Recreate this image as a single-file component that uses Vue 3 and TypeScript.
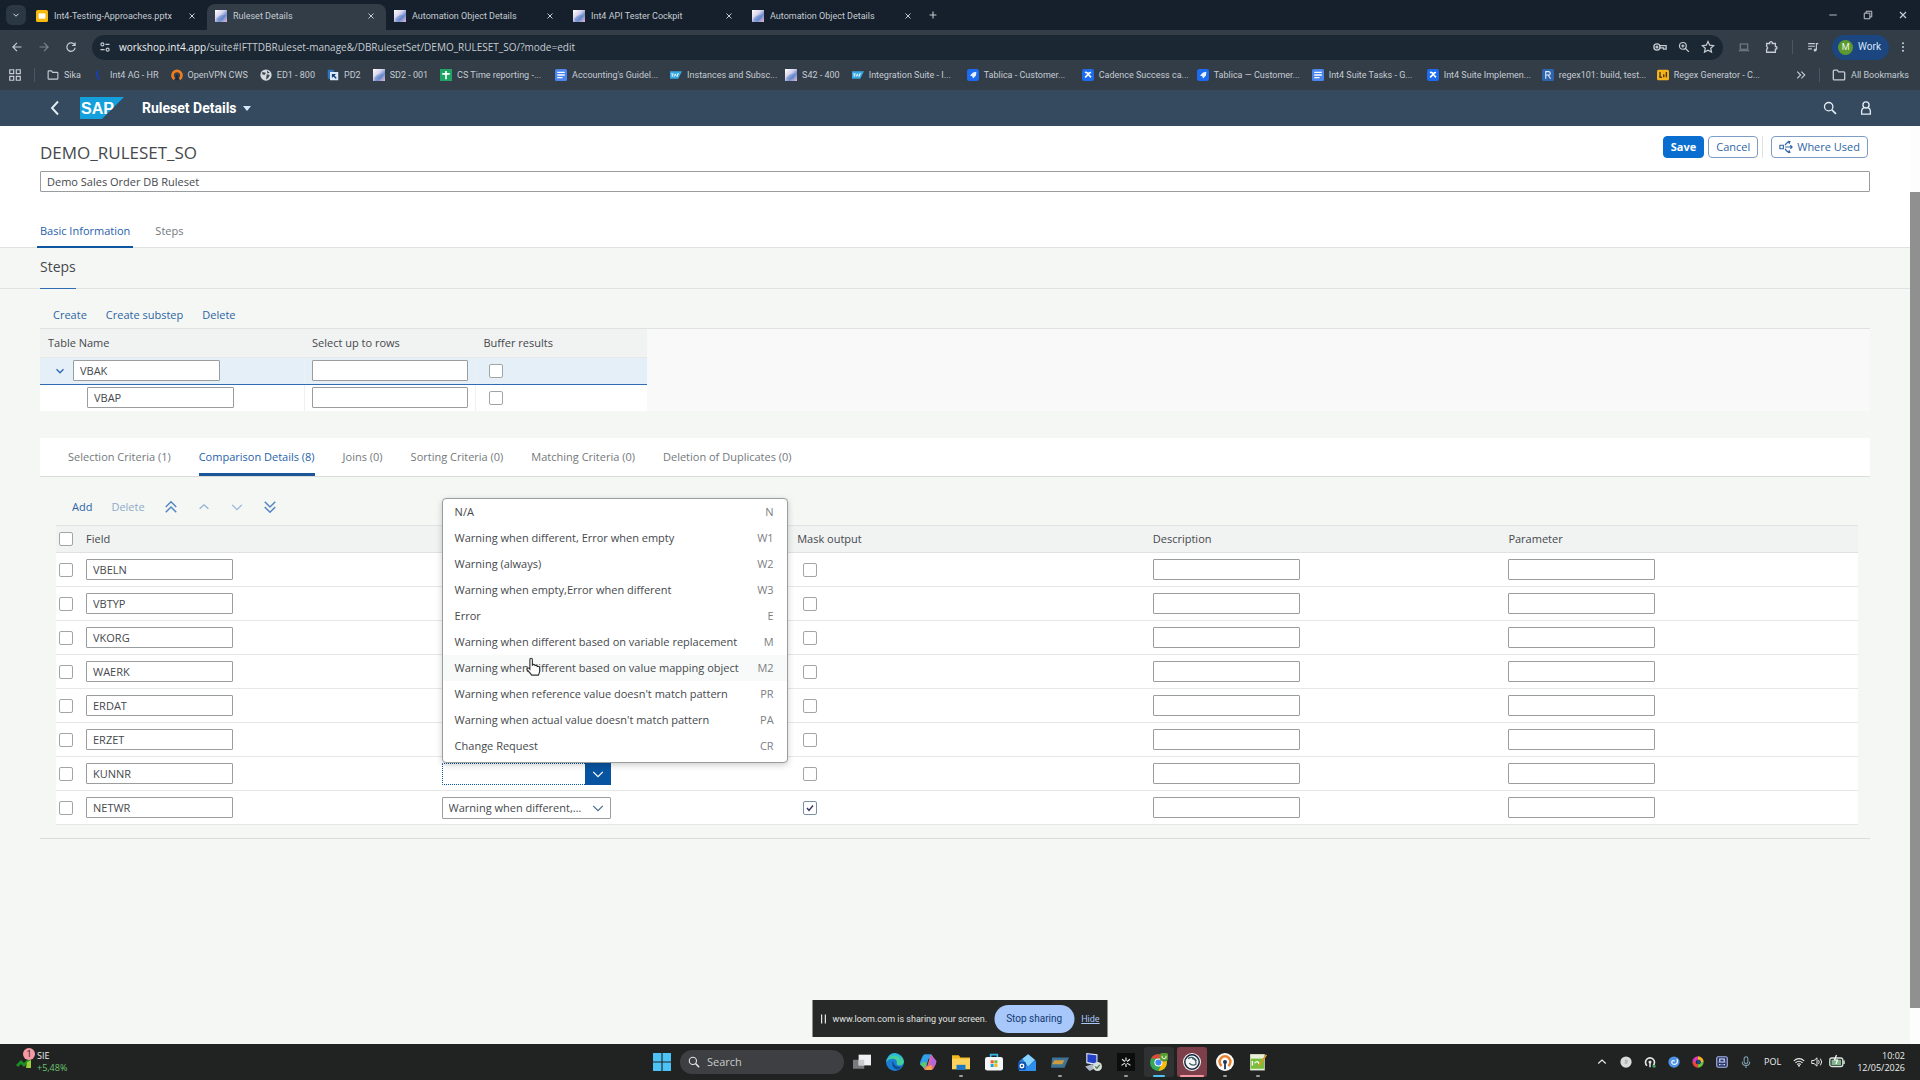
<script setup lang="ts">
import { ref } from 'vue'

const icons: Record<string, string> = {
  down: '<path d="M4 6l4 4 4-4" fill="none" stroke="currentColor" stroke-width="1.6"/>',
  up: '<path d="M3 10l5-4.500 5 4.500" fill="none" stroke="currentColor" stroke-width="1.500"/>',
  thinDown: '<path d="M2.500 5.500L8 11l5.500-5.500" fill="none" stroke="currentColor" stroke-width="1.400"/>',
  top: '<path d="M2 8l6-6 6 6M2 14l6-6 6 6" fill="none" stroke="currentColor" stroke-width="1.700"/>',
  bottom: '<path d="M2 2l6 6 6-6M2 8l6 6 6-6" fill="none" stroke="currentColor" stroke-width="1.700"/>',
  close: '<path d="M4 4l8 8M12 4l-8 8" fill="none" stroke="currentColor" stroke-width="1.600"/>',
  plus: '<path d="M8 2.500v11M2.500 8h11" fill="none" stroke="currentColor" stroke-width="1.700"/>',
  minimise: '<path d="M3 8h10" stroke="currentColor" stroke-width="1.200"/>',
  restore: '<path d="M3 5.500h7.500V13H3zM5.500 5.500V3H13v7.500h-2.500" fill="none" stroke="currentColor" stroke-width="1.300"/>',
  back: '<path d="M14 8H3M8 2.500L2.500 8 8 13.500" fill="none" stroke="currentColor" stroke-width="1.600"/>',
  forward: '<path d="M2 8h11M8 2.500L13.500 8 8 13.500" fill="none" stroke="currentColor" stroke-width="1.600"/>',
  reload: '<path d="M13 5.500A5.600 5.600 0 1 0 13.600 9M13.500 2v4h-4" fill="none" stroke="currentColor" stroke-width="1.600"/>',
  tune: '<g fill="none" stroke="currentColor" stroke-width="1.500"><circle cx="4.500" cy="4.500" r="2"/><path d="M8.500 4.500H14M2 11.500h5.500"/><circle cx="11.500" cy="11.500" r="2"/></g>',
  apps: '<path d="M2 2h4.500v4.500H2zM9.500 2H14v4.500H9.500zM2 9.500h4.500V14H2zM9.500 9.500H14V14H9.500z" fill="none" stroke="currentColor" stroke-width="1.400"/>',
  folder: '<path d="M1.500 3.500q0-1 1-1h3.500l1.500 2h6q1 0 1 1v7q0 1-1 1h-11q-1 0-1-1z" fill="none" stroke="currentColor" stroke-width="1.500"/>',
  key: '<g fill="none" stroke="currentColor" stroke-width="1.500"><circle cx="4.500" cy="8" r="3.500"/><circle cx="4.500" cy="8" r="1"/><path d="M8 6.500h7v4h-3V9H8"/></g>',
  zoomIn: '<g fill="none" stroke="currentColor" stroke-width="1.600"><circle cx="6.500" cy="6.500" r="4.500"/><path d="M10 10l4.500 4.500M6.500 4.500v4M4.500 6.500h4"/></g>',
  star: '<path d="M8 1.800l1.900 4.100 4.500.5-3.300 3 .9 4.400L8 11.600l-4 2.200.9-4.400-3.300-3 4.500-.5z" fill="none" stroke="currentColor" stroke-width="1.400"/>',
  laptop: '<path d="M3 4h10v7H3zM1 13h14" fill="none" stroke="currentColor" stroke-width="1.400"/>',
  puzzle: '<path d="M3 4h3.500V2.800q1.500-1.800 3 0V4H13v3.500h1q1.600 1.500 0 3h-1V14H3v-3.500q2.400-1.500 0-3z" fill="none" stroke="currentColor" stroke-width="1.500"/>',
  queue: '<path d="M1.500 3.500h9M1.500 7h9M1.500 10.500h5M12.500 12V3.500H15" fill="none" stroke="currentColor" stroke-width="1.500"/><circle cx="10.800" cy="12" r="2" fill="currentColor"/>',
  kebab: '<g fill="currentColor"><circle cx="8" cy="3" r="1.400"/><circle cx="8" cy="8" r="1.400"/><circle cx="8" cy="13" r="1.400"/></g>',
  more: '<path d="M3 3.500L7.500 8 3 12.500M8.500 3.500L13 8l-4.500 4.500" fill="none" stroke="currentColor" stroke-width="1.500"/>',
  navBack: '<path d="M11 1.500L5 8l6 6.500" fill="none" stroke="currentColor" stroke-width="1.900"/>',
  search: '<circle cx="6.500" cy="6.500" r="4.800" fill="none" stroke="currentColor" stroke-width="1.500"/><path d="M10 10l4.800 4.800" stroke="currentColor" stroke-width="2"/>',
  person: '<circle cx="8" cy="4.500" r="3.500" fill="none" stroke="currentColor" stroke-width="1.500"/><path d="M5.500 7.500Q3 9 3 11.500V15h10v-3.500Q13 9 10.500 7.500" fill="none" stroke="currentColor" stroke-width="1.500"/>',
  usage: '<g fill="none" stroke="currentColor" stroke-width="1.300"><path d="M1 6h4v4H1zM7 8h8M13 6l2 2-2 2M7 6q1-3 5-4M10 1.500l2.500.5-1 2.300M7 10q1 3 5 4M10 14.500l2.500-.5-1-2.300"/></g>',
  tile: '<defs><linearGradient id="tileFill" x1="0" y1="0" x2="1" y2="1"><stop offset="0" stop-color="#fff"/><stop offset=".4" stop-color="#d9d4ee"/><stop offset=".65" stop-color="#6f8fd0"/><stop offset="1" stop-color="#e9b6d6"/></linearGradient></defs><path d="M0 0h16v16H0z" fill="url(#tileFill)"/><path d="M2 11q5-6 12-4l-3 6-9 1z" fill="#4c7dc4" opacity=".4"/>',
  slides: '<rect width="16" height="16" rx="2" fill="#f6b90c"/><path d="M3.500 4.500h9v7h-9z" fill="#fff"/>',
  sheets: '<path d="M0 0h16v16H0z" fill="#1fa463"/><path d="M8 2.500v11M3 6.500h10" stroke="#fff" stroke-width="2.200"/>',
  docs: '<rect width="16" height="16" rx="2" fill="#4a86ee"/><path d="M3 4.500h10M3 8h10M3 11.500h7" stroke="#fff" stroke-width="1.900"/>',
  arc: '<path d="M7 2q-4 6 1 12" fill="none" stroke="#1d3fae" stroke-width="2.600"/>',
  vpn: '<path d="M4.500 13.500A6 6 0 1 1 11.500 13.500" fill="none" stroke="#ee7d20" stroke-width="3.600"/><path d="M6.800 8h2.400l1 7H5.800z" fill="#1b2a44"/>',
  globe: '<circle cx="8" cy="8" r="7.500" fill="#d5d9dd"/><path d="M3 4l5 1-2 3-3-1zM9 7l4 1-2 4-3 2zM9 2l4 3-3 1z" fill="#3c4650"/>',
  pd: '<path d="M1 1h8v5H5v7H1z" fill="#2f75bd"/><path d="M4 4h11v11H4z" fill="#d8e9fb"/><path d="M6.500 12V6.500H12L10 8.500l3 3.500-1.500 1-3-3z" fill="#153b76"/>',
  sap: '<path d="M0 3h16l-5 10H0z" fill="#35a8e4"/><path d="M1.500 6.500h3l-2 3h2M6 10l1-3.500L8.500 10M10 10V6.500h2" stroke="#fff" stroke-width="1.100" fill="none"/>',
  jira: '<rect width="16" height="16" rx="3" fill="#1d6bee"/><path d="M12.500 3.500L8 4.500 4 8.500l3 1 1 3 4-4z" fill="#e8f1ff"/>',
  confluence: '<rect width="16" height="16" rx="3" fill="#1d6bee"/><path d="M4 5q2-1.500 4 1.500T12 11M12 5q-2-1-4 2t-4 4" fill="none" stroke="#fff" stroke-width="2.200"/>',
  regex: '<rect width="16" height="16" rx="2" fill="#2e63ae"/><path d="M5 13V3.500h3.500q2.500 0 2.500 2.300T8.500 8H5M8 8l3.500 5" fill="none" stroke="#e3edf9" stroke-width="1.500"/>',
  generator: '<rect y="1" width="16" height="14" rx="2" fill="#f4b41a"/><path d="M4 4v7h2.500M12.500 4v7M9 4.500h.1M9 7v4" fill="none" stroke="#4b3305" stroke-width="1.800"/>',
  windows: '<path d="M0 0h7.500v7.500H0zM8.500 0H16v7.500H8.500zM0 8.500h7.500V16H0zM8.500 8.500H16V16H8.500z" fill="#4cc2f5"/>',
  taskView: '<path d="M0 6h10v8H0z" fill="#777b7d"/><path d="M5 1.500h11v9.500H5z" fill="#eef0f1"/><path d="M5 6h5v5H5z" fill="#c9cccd"/>',
  edge: '<circle cx="8" cy="8" r="8" fill="#1a7fd4"/><path d="M.2 8A8 8 0 0 1 16 7.500Q15.500 11 11.500 11 8.500 10.500 9.800 8.500 9.500 5 6 5 2 5 .2 8z" fill="#45cf9a"/><path d="M1 7Q4 1 9 2.500 13.500 4 13 8 14.500 1.500 8 0 2 0 1 7z" fill="#2bb8d9"/><path d="M6 7q-2 4.500 3 7.500 3 .5 5-2.500-6 1.500-8-5z" fill="#0f4d97"/>',
  copilot: '<path d="M5.500 1H11l2 4H8.500L6 13.500Q5.500 15 4 13L.8 10q0-2 1.700-5.500Q3.500 1 5.500 1z" fill="#2e9fe8"/><path d="M10.500 15H5l-2-4h4.500L10 2.500q1-2.500 2.500 1L15.500 7q0 2.500-1.700 5-1 3-3.300 3z" fill="#e66a8e"/><path d="M11 2l4.300 5-1.500 4-3.800.5z" fill="#b266e0"/><path d="M1 10l3-2 3 .5L5.500 14z" fill="#62c66b"/><path d="M6 13l5-2.500.5 4.500H6z" fill="#f7a54a"/>',
  explorer: '<path d="M0 2h6l1.500 2H16v10H0z" fill="#f1b71f"/><path d="M0 5h16v9.500H0z" fill="#fdd25c"/><path d="M4 10.500h8V15H4z" fill="#1e78c8"/>',
  store: '<path d="M5 4V1.500h6V4" fill="none" stroke="#39b6ea" stroke-width="1.500"/><rect y="3.500" width="16" height="12" rx="2" fill="#f5f6f7"/><path d="M5 6.500h2.700v2.700H5z" fill="#ef5a28"/><path d="M8.300 6.500H11v2.700H8.300z" fill="#7db928"/><path d="M5 9.800h2.700v2.700H5z" fill="#1aa3e8"/><path d="M8.300 9.800H11v2.700H8.300z" fill="#fbb813"/>',
  mail: '<path d="M1 7l8-6 7 6v9H1z" fill="#2b7bd8"/><path d="M4 5l5-4 6 5-6 6z" fill="#86d3ff"/><path d="M1 9l8 3 7-5v9H1z" fill="#2f8fee"/><rect y="8" width="7" height="7" rx="1" fill="#1353ae"/><circle cx="3.500" cy="11.500" r="1.600" fill="none" stroke="#fff" stroke-width="1.200"/>',
  sapgui: '<path d="M1 4h15l-4 9H0z" fill="#3e7396"/><path d="M3 6.500h9l-2 3.500H1z" fill="#d09b3c"/>',
  remote: '<path d="M2 0l10 1v10L2 9z" fill="#dfe4f7"/><path d="M3 1l8 1v7.500L3 8z" fill="#2340c8"/><path d="M1 12l6-2 4 3-6 3z" fill="#aeb7c7"/><circle cx="12" cy="12" r="4" fill="#d9dfd9"/><path d="M10 12l1.500 1.500L14 10.500" fill="none" stroke="#4b7b54" stroke-width="1.200"/>',
  spark: '<rect width="16" height="16" rx="1" fill="#0b0c0c"/><path d="M8 4v3M8 9.500v3M4.500 5.500l2.500 2M11.500 5.500L9 7.500M4 11l3-2M12 11l-3-2" stroke="#f0f2f2" stroke-width="1"/>',
  chrome: '<circle cx="7.500" cy="8.500" r="7.500" fill="#34a853"/><path d="M1 4.800a7.500 7.500 0 0 1 13 0H7.500z" fill="#ea4335"/><path d="M14 4.800A7.500 7.500 0 0 1 7.500 16L11 8.500 7.500 4.800z" fill="#fbbc05"/><circle cx="7.500" cy="8.500" r="3.600" fill="#fff"/><circle cx="7.500" cy="8.500" r="2.700" fill="#4285f4"/><circle cx="12.500" cy="3.500" r="4.200" fill="#5a9a2f"/><path d="M10.800 2.500v1.500q1.700 2 3.400 0V2.500" fill="none" stroke="#e7f3dc"/>',
  loom: '<circle cx="8" cy="8" r="8" fill="#f4f6f6"/><circle cx="8" cy="8" r="6.400" fill="none" stroke="#16243b" stroke-width="1.300"/><path d="M4.500 5Q9 2 12 7M8 5q4 0 3.500 5-3 2-6-1" fill="none" stroke="#3c5a61" stroke-width="1.100"/>',
  vpnRound: '<circle cx="8" cy="8" r="8" fill="#fbfbfb"/><path d="M5 11.500A4.800 4.800 0 1 1 11 11.500" fill="none" stroke="#e9822b" stroke-width="2.200"/><circle cx="8" cy="8" r="1.800" fill="#1b3565"/><path d="M7.200 9h1.600v5.500H7.200z" fill="#1b3565"/>',
  notepad: '<path d="M1 1h13v14.500H1z" fill="#e9efd9"/><path d="M1.500 5h12v9h-12z" fill="#79bf3d"/><path d="M3 7v4M5 9q3-3 4 1" stroke="#fff" stroke-width="1.200" fill="none"/><path d="M15 1l1 1-6 9-2 1 .5-2z" fill="#d79b2b"/>',
  trayGrey: '<circle cx="8" cy="8" r="7.500" fill="#dadcdb"/><path d="M7 4l4 2-2 5-3-1z" fill="#b6b9b8"/>',
  trayVpn: '<path d="M4 13A6 6 0 1 1 12 13" fill="none" stroke="#e5e7e6" stroke-width="2.200"/><circle cx="8" cy="8" r="2" fill="#e5e7e6"/><path d="M7 9h2v6H7z" fill="#e5e7e6"/><circle cx="13.500" cy="13.500" r="2" fill="#3aa55d"/>',
  traySwirl: '<circle cx="8" cy="8" r="7.500" fill="#4e93e6"/><path d="M12 4q2 5-2 7-5 1-5-3 1-3 4-1" fill="none" stroke="#e7f2ff" stroke-width="1.700"/>',
  trayRing: '<g fill="none" stroke-width="4.500"><path d="M8 2.700A5.300 5.300 0 0 1 13.300 8" stroke="#f5b71c"/><path d="M13.300 8A5.300 5.300 0 0 1 8 13.300" stroke="#6fc13c"/><path d="M8 13.300A5.300 5.300 0 0 1 2.700 8" stroke="#e5483a"/><path d="M2.700 8A5.300 5.300 0 0 1 8 2.700" stroke="#d83bb5"/></g><circle cx="9" cy="8" r="3" fill="#174a86"/>',
  trayBox: '<rect x="1" y="1" width="14" height="14" rx="2" fill="#2a3566" stroke="#a9b6e8" stroke-width="1.500"/><path d="M5 7V4h6v3M3.500 8h9M4 11.500h2M7.500 11.500h1M10 11.500h2" fill="none" stroke="#dbe3ff" stroke-width="1.500"/>',
  mic: '<rect x="5.500" y="1" width="5" height="9" rx="2.500" fill="none" stroke="#86a6b8" stroke-width="1.400"/><path d="M3 7.500q0 5 5 5t5-5M8 12.500V16" fill="none" stroke="#86a6b8" stroke-width="1.400"/>',
  wifi: '<path d="M1 6.500q7-6 14 0M3.300 9q4.700-4 9.400 0M5.500 11.300q2.500-2 5 0" fill="none" stroke="currentColor" stroke-width="1.500"/><circle cx="8" cy="13" r="1.300" fill="currentColor"/>',
  sound: '<path d="M1 6h3l4-3.500v11L4 10H1zM10 5.500q2 2.500 0 5M12.500 3.500q3.500 4.500 0 9" fill="none" stroke="currentColor" stroke-width="1.300"/>',
  battery: '<rect x=".8" y="4" width="13" height="8.500" rx="2" fill="none" stroke="#d9e6dc" stroke-width="1.300"/><path d="M2.500 5.700h9.600V11H2.500z" fill="#7fb58c"/><path d="M15 6.500v3.500" stroke="#d9e6dc" stroke-width="1.500"/><path d="M7.500 1L5.500 6h3l-1.500 4" fill="none" stroke="#fff" stroke-width="1.200"/>',
  pause: '<path d="M5.500 2v12M10.500 2v12" stroke="currentColor" stroke-width="1.600"/>',
  pointer: '<path d="M5.500 9V2.200q0-1.200 1-1.200t1 1.200V7l.3-1q1.500-.5 1.800.8 1.500-.5 1.800.8 1.800-.4 1.900 1V11q0 1.700-1 3.500H7Q5 12 3.200 10.200q-.4-1.400.9-1.400.6 0 1.400 1z" fill="#fff" stroke="#333" stroke-width=".9"/>',
  stock: '<path d="M1 12l4-4 3 3 6-6" fill="none" stroke="#1d8d25" stroke-width="3"/><path d="M10 14l1-6 4-2v8z" fill="#9ccf3a"/>',
}

const browserTabs = [
  { icon: 'slides', title: 'Int4-Testing-Approaches.pptx' },
  { icon: 'tile', title: 'Ruleset Details', active: true },
  { icon: 'tile', title: 'Automation Object Details' },
  { icon: 'tile', title: 'Int4 API Tester Cockpit' },
  { icon: 'tile', title: 'Automation Object Details' },
]

const bookmarks = [
  { icon: 'folder', title: 'Sika' },
  { icon: 'arc', title: 'Int4 AG - HR' },
  { icon: 'vpn', title: 'OpenVPN CWS' },
  { icon: 'globe', title: 'ED1 - 800' },
  { icon: 'pd', title: 'PD2' },
  { icon: 'tile', title: 'SD2 - 001' },
  { icon: 'sheets', title: 'CS Time reporting -...', long: true },
  { icon: 'docs', title: "Accounting's Guidel...", long: true },
  { icon: 'sap', title: 'Instances and Subsc...', long: true },
  { icon: 'tile', title: 'S42 - 400' },
  { icon: 'sap', title: 'Integration Suite - I...', long: true },
  { icon: 'jira', title: 'Tablica - Customer...', long: true },
  { icon: 'confluence', title: 'Cadence Success ca...', long: true },
  { icon: 'jira', title: 'Tablica — Customer...', long: true },
  { icon: 'docs', title: 'Int4 Suite Tasks - G...', long: true },
  { icon: 'confluence', title: 'Int4 Suite Implemen...', long: true },
  { icon: 'regex', title: 'regex101: build, test...', long: true },
  { icon: 'generator', title: 'Regex Generator - C...', long: true },
]

const description = ref('Demo Sales Order DB Ruleset')

const steps = ref([
  { table: 'VBAK', rows: '', buffer: false, parent: true },
  { table: 'VBAP', rows: '', buffer: false, parent: false },
])

const detailTabs = [
  'Selection Criteria (1)',
  'Comparison Details (8)',
  'Joins (0)',
  'Sorting Criteria (0)',
  'Matching Criteria (0)',
  'Deletion of Duplicates (0)',
]

const rules = [
  { key: 'N', text: 'N/A' },
  { key: 'W1', text: 'Warning when different, Error when empty' },
  { key: 'W2', text: 'Warning (always)' },
  { key: 'W3', text: 'Warning when empty,Error when different' },
  { key: 'E', text: 'Error' },
  { key: 'M', text: 'Warning when different based on variable replacement' },
  { key: 'M2', text: 'Warning when different based on value mapping object' },
  { key: 'PR', text: "Warning when reference value doesn't match pattern" },
  { key: 'PA', text: "Warning when actual value doesn't match pattern" },
  { key: 'CR', text: 'Change Request' },
]

const names = ['VBELN', 'VBTYP', 'VKORG', 'WAERK', 'ERDAT', 'ERZET', 'KUNNR', 'NETWR']
const fields = ref(
  names.map((name) => ({
    name,
    selected: false,
    rule: name === 'NETWR' ? 'W1' : '',
    open: name === 'KUNNR',
    mask: name === 'NETWR',
    description: '',
    parameter: '',
  })),
)

const taskbarApps = [
  { icon: 'taskView' },
  { icon: 'edge' },
  { icon: 'copilot' },
  { icon: 'explorer', state: 'running' },
  { icon: 'store' },
  { icon: 'mail' },
  { icon: 'sapgui', state: 'running' },
  { icon: 'remote' },
  { icon: 'spark', state: 'running' },
  { icon: 'chrome', state: 'focused' },
  { icon: 'loom', state: 'alert' },
  { icon: 'vpnRound', state: 'running' },
  { icon: 'notepad', state: 'running' },
]
const tray = ['up', 'trayGrey', 'trayVpn', 'traySwirl', 'trayRing', 'trayBox', 'mic']
</script>

<template>
  <div class="desktop">
    <header class="browser">
      <div class="tab-strip">
        <button class="tab-search" aria-label="Search tabs"><svg class="ic10" viewBox="0 0 16 16" v-html="icons.down" /></button>
        <div v-for="(tab, i) in browserTabs" :key="i" class="tab" :class="{ active: tab.active }">
          <svg class="ic12" viewBox="0 0 16 16" v-html="icons[tab.icon]" />
          <span class="tab-title">{{ tab.title }}</span>
          <button class="plain" aria-label="Close tab"><svg class="ic10" viewBox="0 0 16 16" v-html="icons.close" /></button>
        </div>
        <button class="plain new-tab" aria-label="New tab"><svg class="ic10" viewBox="0 0 16 16" v-html="icons.plus" /></button>
        <div class="window-buttons">
          <button v-for="n in ['minimise', 'restore', 'close']" :key="n" class="plain" :aria-label="n">
            <svg class="ic12" viewBox="0 0 16 16" v-html="icons[n]" />
          </button>
        </div>
      </div>

      <div class="toolbar">
        <button class="plain" aria-label="Back"><svg class="ic12" viewBox="0 0 16 16" v-html="icons.back" /></button>
        <button class="plain dim" aria-label="Forward"><svg class="ic12" viewBox="0 0 16 16" v-html="icons.forward" /></button>
        <button class="plain" aria-label="Reload"><svg class="ic12" viewBox="0 0 16 16" v-html="icons.reload" /></button>
        <div class="omnibox">
          <svg class="ic12" viewBox="0 0 16 16" v-html="icons.tune" />
          <span class="url"><b>workshop.int4.app</b>/suite#IFTTDBRuleset-manage&amp;/DBRulesetSet/DEMO_RULESET_SO/?mode=edit</span>
          <svg class="ic14" viewBox="0 0 16 16" v-html="icons.key" />
          <svg class="ic12" viewBox="0 0 16 16" v-html="icons.zoomIn" />
          <svg class="ic14" viewBox="0 0 16 16" v-html="icons.star" />
        </div>
        <div class="extensions">
          <svg class="ic12 dim" viewBox="0 0 16 16" v-html="icons.laptop" />
          <svg class="ic14" viewBox="0 0 16 16" v-html="icons.puzzle" />
          <span class="rule" />
          <svg class="ic12" viewBox="0 0 16 16" v-html="icons.queue" />
        </div>
        <button class="profile"><span class="avatar">M</span>Work</button>
        <button class="plain kebab" aria-label="Menu"><svg class="ic12" viewBox="0 0 16 16" v-html="icons.kebab" /></button>
      </div>

      <nav class="bookmarks">
        <svg class="ic14" viewBox="0 0 16 16" v-html="icons.apps" />
        <span class="rule" />
        <a v-for="b in bookmarks" :key="b.title" href="#" class="bookmark" :class="{ long: b.long }">
          <svg class="ic12" viewBox="0 0 16 16" v-html="icons[b.icon]" /><span>{{ b.title }}</span>
        </a>
        <div class="bookmarks-end">
          <svg class="ic12" viewBox="0 0 16 16" v-html="icons.more" />
          <span class="rule" />
          <a href="#" class="bookmark"><svg class="ic14" viewBox="0 0 16 16" v-html="icons.folder" /><span>All Bookmarks</span></a>
        </div>
      </nav>
    </header>

    <header class="shell">
      <button class="plain" aria-label="Back"><svg class="ic16" viewBox="0 0 16 16" v-html="icons.navBack" /></button>
      <svg class="sap-logo" viewBox="0 0 44 22" role="img" aria-label="SAP">
        <path d="M0 0h44L22 22H0z" fill="#14a0dc" />
        <text x="1" y="17" font-family="Liberation Sans, sans-serif" font-weight="700" font-size="16" fill="#fff">SAP</text>
      </svg>
      <button class="app-title">Ruleset Details <span class="caret" /></button>
      <div class="shell-end">
        <button class="plain" aria-label="Search"><svg class="ic14" viewBox="0 0 16 16" v-html="icons.search" /></button>
        <button class="plain" aria-label="User"><svg class="ic14" viewBox="0 0 16 16" v-html="icons.person" /></button>
      </div>
    </header>

    <div class="viewport">
      <main>
        <section class="object-header">
          <div class="title-row">
            <h1>DEMO_RULESET_SO</h1>
            <div class="actions">
              <button class="btn primary">Save</button>
              <button class="btn">Cancel</button>
              <span class="sep" />
              <button class="btn usage"><svg class="ic14" viewBox="0 0 16 16" v-html="icons.usage" />Where Used</button>
            </div>
          </div>
          <input v-model="description" class="field wide" aria-label="Description">
          <nav class="anchors">
            <a href="#" class="anchor current">Basic Information</a>
            <a href="#" class="anchor">Steps</a>
          </nav>
        </section>

        <div class="section-title"><h2>Steps</h2></div>

        <div class="step-tools">
          <button class="link">Create</button>
          <button class="link">Create substep</button>
          <button class="link">Delete</button>
        </div>

        <div class="step-area">
          <table class="steps">
            <thead>
              <tr><th class="c-name">Table Name</th><th>Select up to rows</th><th>Buffer results</th></tr>
            </thead>
            <tbody>
              <tr v-for="s in steps" :key="s.table" :class="{ picked: s.parent }">
                <td>
                  <div class="tree" :class="{ child: !s.parent }">
                    <button v-if="s.parent" class="plain expander" aria-label="Collapse"><svg class="ic14" viewBox="0 0 16 16" v-html="icons.down" /></button>
                    <input v-model="s.table" class="field" aria-label="Table Name">
                  </div>
                </td>
                <td><input v-model="s.rows" class="field full" aria-label="Select up to rows"></td>
                <td><input v-model="s.buffer" type="checkbox" class="tick" aria-label="Buffer results"></td>
              </tr>
            </tbody>
          </table>
        </div>

        <section class="details">
          <nav class="detail-tabs">
            <a v-for="(t, i) in detailTabs" :key="t" href="#" :class="{ current: i === 1 }">{{ t }}</a>
          </nav>

          <div class="detail-tools">
            <button class="link">Add</button>
            <button class="link off" disabled>Delete</button>
            <button class="plain move" aria-label="Move to top"><svg class="ic14" viewBox="0 0 16 16" v-html="icons.top" /></button>
            <button class="plain move weak" aria-label="Move up"><svg class="ic14" viewBox="0 0 16 16" v-html="icons.up" /></button>
            <button class="plain move weak" aria-label="Move down"><svg class="ic14" viewBox="0 0 16 16" v-html="icons.thinDown" /></button>
            <button class="plain move" aria-label="Move to bottom"><svg class="ic14" viewBox="0 0 16 16" v-html="icons.bottom" /></button>
          </div>

          <table class="fields">
            <thead>
              <tr>
                <th class="c-check"><input type="checkbox" class="tick" aria-label="Select all"></th>
                <th>Field</th>
                <th />
                <th>Mask output</th>
                <th>Description</th>
                <th>Parameter</th>
              </tr>
            </thead>
            <tbody>
              <tr v-for="f in fields" :key="f.name">
                <td class="c-check"><input v-model="f.selected" type="checkbox" class="tick" :aria-label="'Select ' + f.name"></td>
                <td><input v-model="f.name" class="field" aria-label="Field"></td>
                <td>
                  <div class="combo" :class="{ open: f.open }">
                    <select v-model="f.rule" aria-label="Comparison rule">
                      <option value="" />
                      <option v-for="r in rules" :key="r.key" :value="r.key">{{ r.text }}</option>
                    </select>
                    <span class="arrow"><svg class="ic14" viewBox="0 0 16 16" v-html="icons.thinDown" /></span>
                    <ul v-if="f.open" class="menu" role="listbox" aria-label="Comparison rule">
                      <li v-for="r in rules" :key="r.key" role="option" :class="{ hover: r.key === 'M2' }">
                        <span>{{ r.text }}</span><span class="code">{{ r.key }}</span>
                        <svg v-if="r.key === 'M2'" class="pointer" viewBox="0 0 16 16" v-html="icons.pointer" />
                      </li>
                    </ul>
                  </div>
                </td>
                <td class="c-mask"><input v-model="f.mask" type="checkbox" class="tick" aria-label="Mask output"></td>
                <td><input v-model="f.description" class="field" aria-label="Description"></td>
                <td><input v-model="f.parameter" class="field" aria-label="Parameter"></td>
              </tr>
            </tbody>
          </table>
        </section>
      </main>
      <div class="scrollbar"><div class="thumb" /></div>
    </div>

    <div class="share-bar">
      <svg class="ic12" viewBox="0 0 16 16" v-html="icons.pause" />
      <span>www.loom.com is sharing your screen.</span>
      <button class="stop">Stop sharing</button>
      <a href="#">Hide</a>
    </div>

    <footer class="taskbar">
      <div class="widget">
        <div class="stock"><svg class="ic16" viewBox="0 0 16 16" v-html="icons.stock" /><span class="badge">1</span></div>
        <div class="quote">SIE<span>+5,48%</span></div>
      </div>
      <div class="apps">
        <button class="plain app" aria-label="Start"><svg class="ic18" viewBox="0 0 16 16" v-html="icons.windows" /></button>
        <label class="search"><svg class="ic12" viewBox="0 0 16 16" v-html="icons.search" /><input placeholder="Search" aria-label="Search"></label>
        <button v-for="a in taskbarApps" :key="a.icon" class="plain app" :class="a.state" :aria-label="a.icon">
          <svg class="ic18" viewBox="0 0 16 16" v-html="icons[a.icon]" />
        </button>
      </div>
      <div class="tray">
        <svg v-for="t in tray" :key="t" class="ic12 slot" viewBox="0 0 16 16" v-html="icons[t]" />
        <span class="lang">POL</span>
        <svg class="ic12" viewBox="0 0 16 16" v-html="icons.wifi" />
        <svg class="ic12" viewBox="0 0 16 16" v-html="icons.sound" />
        <svg class="ic16" viewBox="0 0 16 16" v-html="icons.battery" />
        <div class="clock">10:02<span>12/05/2026</span></div>
      </div>
    </footer>
  </div>
</template>

<style>
body { margin: 0; background: #f5f7f5; }
</style>

<style scoped>
* { box-sizing: border-box; }
.desktop { position: relative; min-height: 100vh; display: flex; flex-direction: column; font: 11px/16px "Open Sans", "Noto Sans", sans-serif; color: #45494c; background: #f5f7f5; }
button { font: inherit; cursor: pointer; }
a { color: inherit; text-decoration: none; }
svg { display: block; flex: none; }
.ic10 { width: 10px; height: 10px; }
.ic12 { width: 12px; height: 12px; }
.ic14 { width: 14px; height: 14px; }
.ic16 { width: 16px; height: 16px; }
.ic18 { width: 18px; height: 18px; }
.plain { border: 0; padding: 0; background: none; color: inherit; display: flex; align-items: center; justify-content: center; }
.rule { width: 1px; height: 14px; background: #4a5662; }

.browser { color: #c6ccd2; font: 9px/14px Roboto, sans-serif; background: #323d48; }
.tab-strip { display: flex; align-items: center; height: 30px; padding-left: 6px; background: #15202c; }
.tab-search { width: 20px; height: 20px; margin-right: 2px; padding: 0; border: 0; border-radius: 6px; background: #2b3743; color: #dde2e6; display: flex; align-items: center; justify-content: center; }
.tab { display: flex; align-items: center; gap: 6px; width: 179px; height: 26px; padding: 0 10px 3px 8px; margin-top: 4px; white-space: nowrap; }
.tab.active { background: #323d48; border-radius: 8px 8px 0 0; }
.tab-title { flex: 1; overflow: hidden; }
.new-tab { margin-left: 5px; }
.window-buttons { display: flex; gap: 23px; margin-left: auto; padding-right: 11px; }
.toolbar { display: flex; align-items: center; height: 30px; padding: 4px 11px 0; gap: 15px; }
.dim { opacity: .5; }
.omnibox { flex: 1; display: flex; align-items: center; gap: 11px; height: 25px; padding: 0 8px 0 7px; border-radius: 13px; background: #1b2733; }
.url { flex: 1; margin-left: -3px; font-family: "Open Sans", "Noto Sans", sans-serif; font-size: 10px; }
.url b { font-weight: 500; color: #eef1f4; }
.extensions { display: flex; align-items: center; gap: 14px; margin-right: -2px; }
.profile { display: flex; align-items: center; gap: 5px; height: 25px; padding: 0 8px 0 6px; margin-right: -3px; border: 0; border-radius: 13px; background: #1c4680; color: #d5e5fb; font-size: 10px; }
.avatar { width: 15px; height: 15px; border-radius: 50%; background: #5c9a30; color: #eef8e4; font-size: 9px; line-height: 15px; text-align: center; }
.kebab { margin-left: -4px; }
.bookmarks { display: flex; align-items: center; height: 30px; padding: 0 11px 0 8px; }
.bookmarks .rule { margin: 0 12px; }
.bookmark { display: flex; align-items: center; gap: 5px; margin-right: 12px; white-space: nowrap; }
.bookmark.long { width: 103px; }
.bookmarks-end { display: flex; align-items: center; margin-left: auto; }
.bookmarks-end .bookmark { margin-right: 0; }

.shell { display: flex; align-items: center; height: 36px; padding: 0 47px; background: #354a5f; color: #e4edf5; }
.sap-logo { width: 44px; height: 22px; margin: 0 18px 0 17px; }
.app-title { display: flex; align-items: center; gap: 6px; border: 0; padding: 0; background: none; color: #fff; font: 700 14px/18px Roboto, sans-serif; }
.caret { border: 4px solid transparent; border-top: 5px solid #d1e8ff; border-bottom: 0; }
.shell-end { display: flex; gap: 22px; margin-left: auto; }

.viewport { flex: 1; display: flex; }
main { flex: 1; min-width: 0; }
.scrollbar { display: flex; width: 10px; padding: 66px 0 36px; background: #fcfdfc; }
.thumb { flex: 1; background: #8f908f; }

.object-header { padding: 0 40px; background: #fff; border-bottom: 1px solid #dfe2e1; }
.title-row { display: flex; justify-content: space-between; height: 45px; }
h1 { margin: 15px 0 0; font-size: 17px; font-weight: 400; line-height: 24px; }
.actions { display: flex; align-items: center; gap: 4px; height: 22px; margin: 10px 2px 0 0; }
.btn { display: flex; align-items: center; gap: 4px; height: 22px; padding: 0 7px; border: 1px solid #7e9cc4; border-radius: 4px; background: #fff; color: #2f66a6; }
.btn.primary { border-color: #0a6ed1; background: #0a6ed1; color: #fff; font-weight: 700; }
.sep { width: 1px; height: 22px; margin-right: 4px; background: #dfe2e4; }
.field { display: block; width: 147px; height: 21px; padding: 0 6px; border: 1px solid #9a9d9e; border-radius: 1px; background: #fff; color: #45494c; font: inherit; }
.field.wide, .field.full { width: 100%; }
.anchors { display: flex; gap: 19px; height: 55px; padding-top: 31px; margin-left: -3px; }
.anchor { height: 25px; padding: 0 3px; color: #74797c; }
.anchor.current { color: #1f62ab; border-bottom: 2px solid #0f56a0; }
.section-title { height: 41px; padding: 0 40px; border-bottom: 1px solid #dfe2e1; }
h2 { display: inline-block; height: 41px; margin: 0; padding-top: 9px; border-bottom: 1px solid #2f6cb2; font-size: 14px; font-weight: 400; line-height: 20px; }
.link { border: 0; padding: 0; background: none; color: #2c65a3; }
.step-tools { display: flex; gap: 19px; padding: 18px 53px 5px; }
.step-area { margin: 0 40px; border-top: 1px solid #dfe2e1; background: #f8f9f8; }
table { border-collapse: collapse; table-layout: fixed; }
th { font-weight: 400; text-align: left; }
.steps { width: 607px; }
.steps .c-name { width: 264px; }
.steps th { height: 28px; padding: 0 8px; background: #f1f2f2; border-bottom: 1px solid #e6e8e7; }
.steps td { height: 27px; padding: 0 7px; background: #fff; }
.steps td + td { border-left: 1px solid #eff1f1; }
.steps .picked td { background: #e4eff8; border-bottom: 1px solid #2f6cb2; }
.steps td:last-child { padding-left: 13px; }
.tree { display: flex; align-items: center; padding-left: 6px; gap: 6px; color: #2f6cb2; }
.tree.child { padding-left: 40px; }
.tick { display: block; appearance: none; width: 14px; height: 14px; margin: 0; border: 1px solid #a2a5a6; border-radius: 2px; background: #fff; }
.tick:checked { border-color: #7b90a8; background: #fff url("data:image/svg+xml,%3Csvg xmlns='http://www.w3.org/2000/svg' viewBox='0 0 12 12'%3E%3Cpath d='M3 6l2 2.500 4-5' fill='none' stroke='%23336' stroke-width='1.400'/%3E%3C/svg%3E"); }

.details { margin: 27px 40px 0; border-bottom: 1px solid #d9dcdb; padding-bottom: 13px; }
.detail-tabs { display: flex; gap: 28px; height: 39px; padding: 11px 28px 0; background: #fff; border-bottom: 1px solid #d9dcdb; color: #74797c; white-space: nowrap; }
.detail-tabs a { height: 27px; }
.detail-tabs .current { color: #1f62ab; border-bottom: 3px solid #1b5699; }
.detail-tools { display: flex; align-items: center; gap: 19px; height: 48px; padding: 12px 32px 0; }
.link.off { color: #8eabc9; }
.move { color: #5586bf; }
.move.weak { opacity: .6; }
.fields { width: calc(100% - 28px); margin: 0 12px 0 16px; background: #fff; }
.fields th { height: 27px; padding: 0 6px; background: #f1f2f2; border: solid #dfe2e1; border-width: 1px 0; }
.fields td { height: 34px; padding: 0 6px; border-bottom: 1px solid #e6e8e7; }
.fields .c-check { width: 24px; padding: 0 3px; }
.fields .c-mask { padding-left: 12px; }
.combo { position: relative; width: 169px; height: 22px; }
select { appearance: none; width: 169px; height: 22px; padding: 0 28px 0 6px; border: 1px solid #9a9d9e; border-radius: 1px; background: #fff; color: #45494c; font: inherit; text-overflow: ellipsis; }
.arrow { position: absolute; top: 0; right: 0; width: 26px; height: 22px; display: flex; align-items: center; justify-content: center; color: #4b6b8c; pointer-events: none; }
.open select { border: 1px dotted #0854a0; }
.open .arrow { background: #0854a0; color: #fff; }
.menu { position: absolute; z-index: 2; left: 0; bottom: 100%; width: 346px; margin: 0; padding: 0 0 3px; list-style: none; background: #fff; border: 1px solid #9a9d9e; border-radius: 4px; box-shadow: 0 2px 6px rgba(0, 0, 0, .2); }
.menu li { position: relative; display: flex; justify-content: space-between; padding: 5px 13px 5px 12px; line-height: 16px; white-space: nowrap; }
.menu .hover { background: #f8f9f9; }
.code { color: #7b8083; }
.pointer { position: absolute; left: 80px; top: 2px; width: 20px; height: 20px; }

.share-bar { position: absolute; z-index: 3; left: 50%; bottom: 43px; transform: translateX(-50%); display: flex; align-items: center; gap: 7px; width: 295px; height: 37px; padding: 0 8px 0 5px; background: #272928; color: #e3e5e4; font: 9px/14px Roboto, sans-serif; white-space: nowrap; }
.share-bar svg { margin-right: -4px; }
.stop { flex: none; height: 28px; width: 80px; padding: 0; border: 0; border-radius: 14px; background: #a8c7fa; color: #123a74; font-size: 10px; }
.share-bar a { color: #a8c7fa; text-decoration: underline; }

.taskbar { display: grid; grid-template-columns: 1fr auto 1fr; align-items: center; height: 36px; background: #202322; color: #eceeed; font: 9px/12px "Open Sans", "Noto Sans", sans-serif; }
.widget { display: flex; align-items: center; gap: 5px; padding-left: 16px; }
.stock { position: relative; }
.badge { position: absolute; top: -6px; right: -3px; width: 12px; height: 12px; border-radius: 50%; background: #f59aa5; color: #2a1013; line-height: 12px; text-align: center; }
.quote span, .clock span { display: block; }
.quote span { color: #6cc56f; }
.apps { display: flex; align-items: center; gap: 3px; }
.app { position: relative; width: 30px; height: 30px; border-radius: 3px; }
.search { display: flex; align-items: center; gap: 7px; width: 164px; height: 24px; padding: 0 8px; border-radius: 12px; background: #3d3f42; color: #e3e5e4; }
.search input { width: 100%; min-width: 0; border: 0; padding: 0; background: none; font: 11px/16px "Open Sans", sans-serif; color: #d5d7d6; outline: 0; }
.search input::placeholder { color: #c9cccb; opacity: 1; }
.running::after, .focused::after, .alert::after { content: ""; position: absolute; bottom: 0; width: 4px; height: 2px; border-radius: 1px; background: #9a9d9c; }
.focused { background: #2f3132; }
.focused::after { width: 12px; background: #4cc2f5; }
.alert { background: #7d3f49; }
.alert::after { width: 24px; background: #f59aa5; }
.tray { display: flex; align-items: center; justify-content: flex-end; gap: 6px; padding-right: 15px; }
.slot { margin-right: 6px; }
.lang { margin-right: 6px; }
.clock { margin-left: 6px; text-align: right; }
</style>
